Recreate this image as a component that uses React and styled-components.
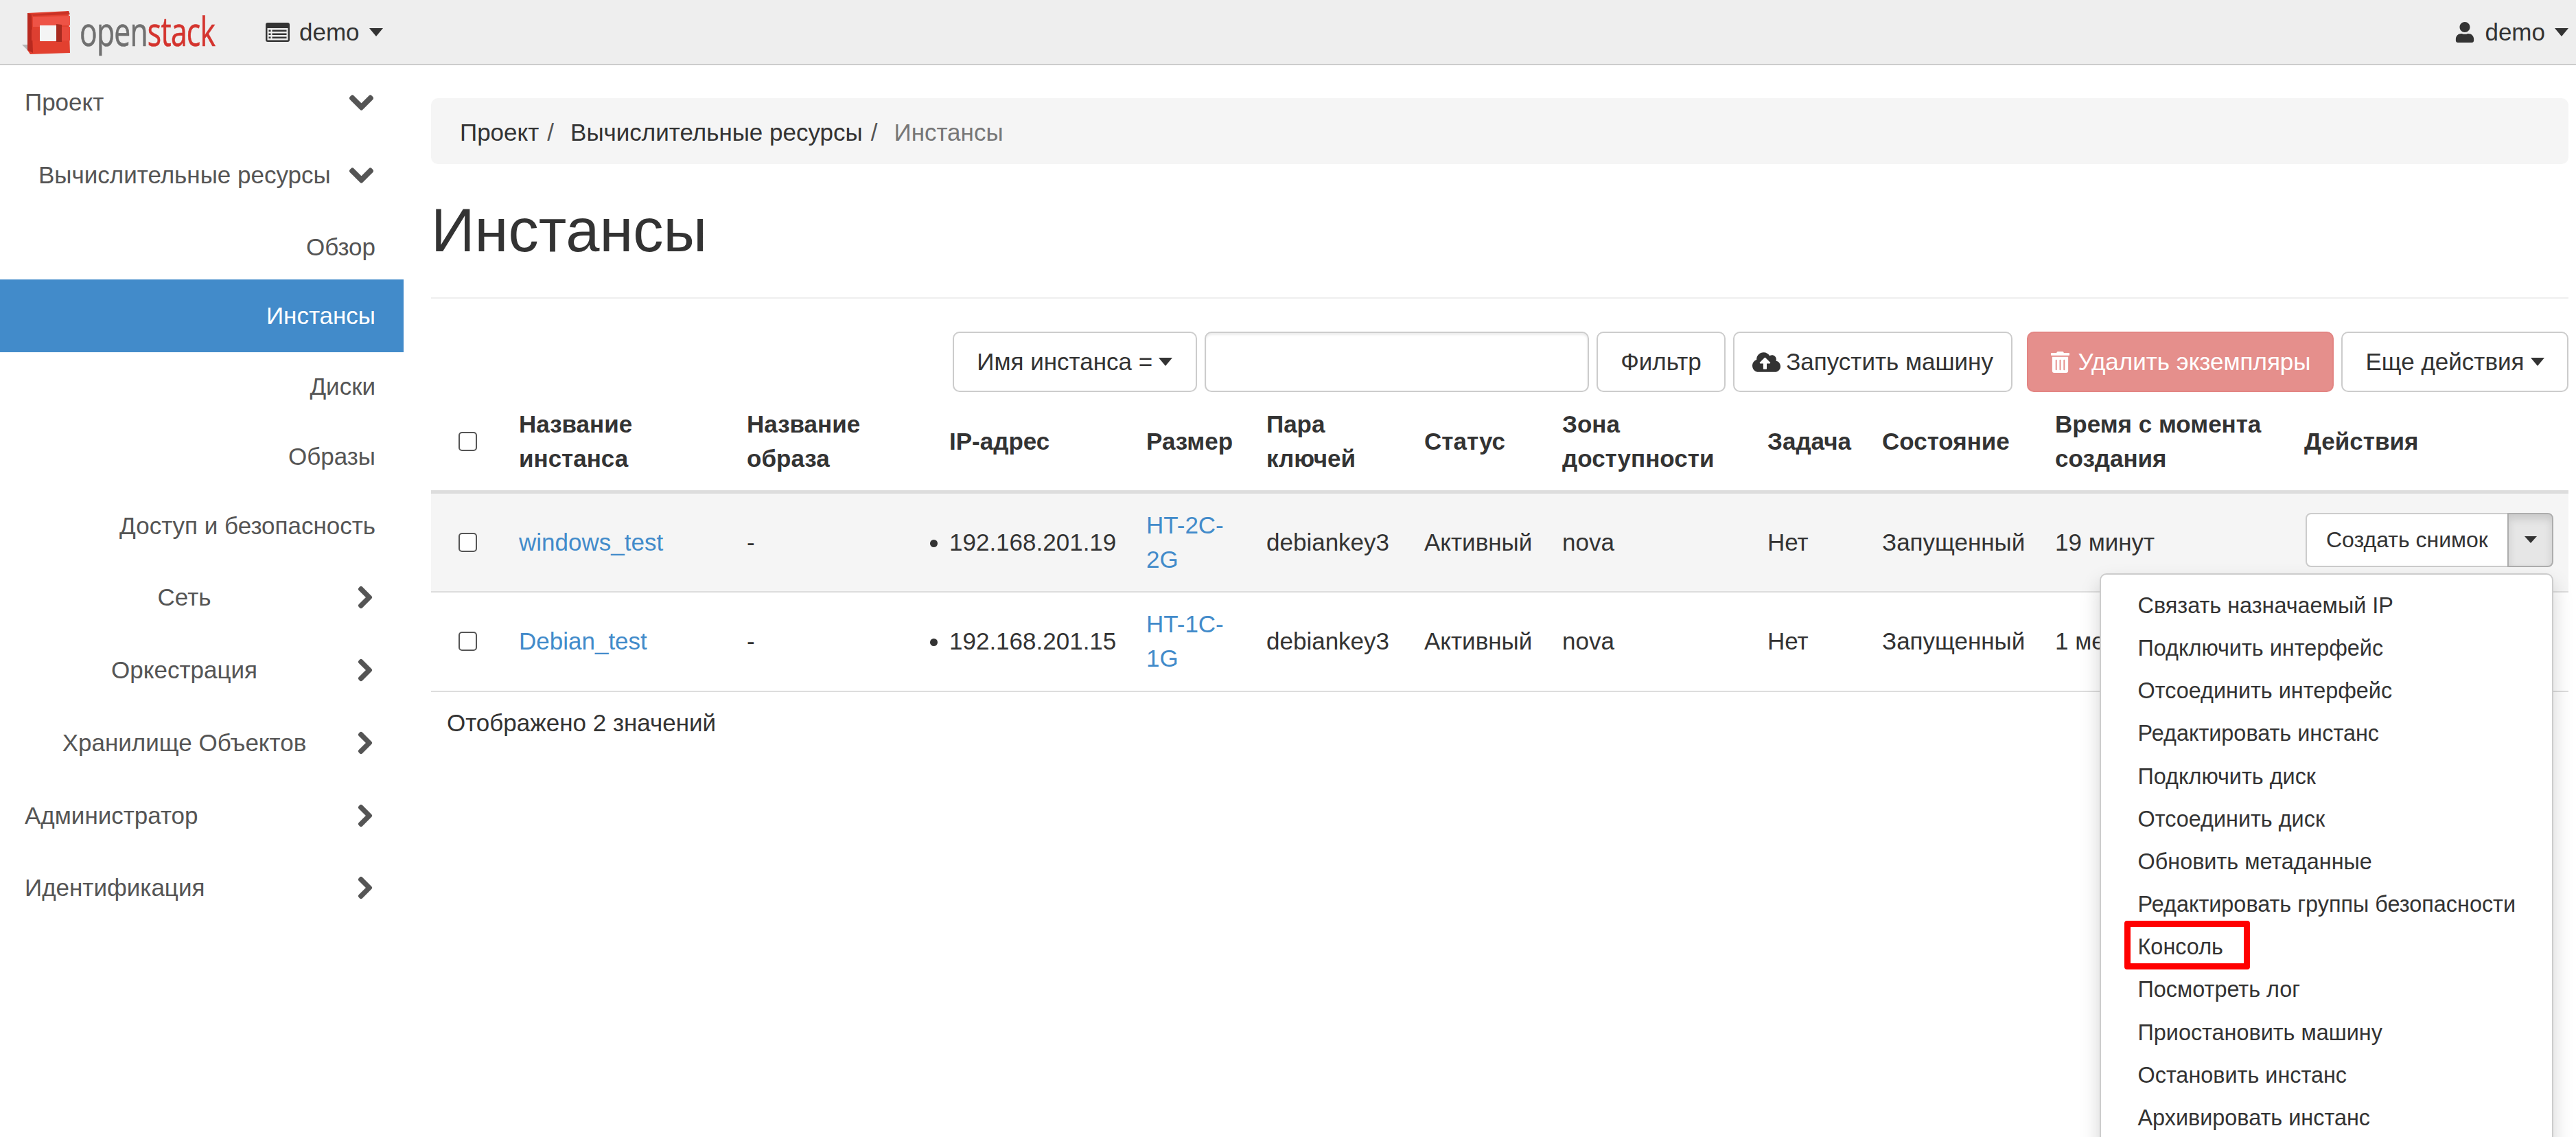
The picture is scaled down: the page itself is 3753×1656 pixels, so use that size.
import React from 'react';
import styled, { createGlobalStyle } from 'styled-components';
import {
    FaChevronDown,
    FaChevronRight,
    FaUser,
    FaTrashAlt,
    FaCloudUploadAlt,
} from 'react-icons/fa';

const GlobalStyle = createGlobalStyle`
    html, body {
        margin: 0;
        padding: 0;
        background: #ffffff;
    }
    body {
        font-family: "Liberation Sans", Arial, sans-serif;
        font-size: 35px;
        line-height: 50px;
        color: #333333;
    }
    * {
        box-sizing: border-box;
    }
`;

const Page = styled.div`
    width: 3753px;
    height: 1656px;
    overflow: hidden;
    background: #ffffff;
`;

const TopBar = styled.header`
    display: flex;
    align-items: center;
    height: 95px;
    padding: 0 11px 0 32px;
    background: #eeeeee;
    border-bottom: 2.5px solid #cccccc;
`;

const Logo = styled.div`
    display: flex;
    align-items: center;
    width: 355px;
    height: 93px;
    filter: blur(0.7px);
`;

const LogoWord = styled.span`
    display: inline-block;
    margin-left: 12px;
    margin-top: -4px;
    font-family: "Open Sans", sans-serif;
    font-size: 58px;
    line-height: 70px;
    letter-spacing: -1px;
    color: #707070;
    -webkit-text-stroke: 0.6px currentColor;
    transform: scaleX(0.735);
    transform-origin: left center;
    white-space: nowrap;

    & > b {
        font-weight: 400;
        color: #d4342e;
    }
`;

const TopMenu = styled.div`
    display: flex;
    align-items: center;
    gap: 14px;
    margin-left: ${(p) => (p.$right ? 'auto' : '0')};
    color: #333333;
`;

const Caret = styled.i`
    display: inline-block;
    width: 0;
    height: 0;
    border-top: ${(p) => p.$size * 0.6}px solid ${(p) => p.$color || '#333333'};
    border-left: ${(p) => p.$size / 2}px solid transparent;
    border-right: ${(p) => p.$size / 2}px solid transparent;
`;

const Layout = styled.div`
    display: flex;
    align-items: flex-start;
`;

const Sidebar = styled.nav`
    flex: none;
    width: 588px;
    padding-top: 1px;
    color: #555555;
`;

const ChevronDown = styled(FaChevronDown)`
    flex: none;
    stroke: currentColor;
    stroke-width: 24px;
`;

const ChevronRight = styled(FaChevronRight)`
    flex: none;
    stroke: currentColor;
    stroke-width: 24px;
`;

const ParentRow = styled.div`
    display: flex;
    align-items: center;
    justify-content: space-between;
    height: ${(p) => (p.$open ? '106px' : '105.5px')};
    padding: 0 ${(p) => (p.$open ? '42px' : '38px')} 0 ${(p) => (p.$sub ? '56px' : '36px')};
    margin-bottom: ${(p) => p.$gap || 0}px;
`;

const CenterRow = styled.div`
    display: flex;
    align-items: center;
    height: 106px;
    padding: 0 38px 0 23px;

    & > span {
        flex: 1;
        text-align: center;
    }
`;

const LeafRow = styled.div`
    display: flex;
    align-items: center;
    justify-content: flex-end;
    height: ${(p) => (p.$active ? '105.5px' : '101.5px')};
    margin-top: ${(p) => (p.$active ? '-4px' : '0')};
    padding-right: 41px;
    background: ${(p) => (p.$active ? '#428bca' : 'transparent')};
    color: ${(p) => (p.$active ? '#ffffff' : '#555555')};
`;

const Main = styled.main`
    flex: 1;
    min-width: 0;
    padding: 48px 11px 0 40px;
`;

const Breadcrumb = styled.ol`
    display: flex;
    align-items: center;
    height: 96px;
    margin: 0;
    padding: 3px 42px 0;
    list-style: none;
    background: #f5f5f5;
    border-radius: 10px;
`;

const Crumb = styled.li`
    color: ${(p) => (p.$last ? '#777777' : '#333333')};

    &:not(:last-child)::after {
        content: '/';
        padding: 0 24px 0 12px;
        color: #555555;
    }
`;

const PageHeader = styled.div`
    display: flex;
    align-items: center;
    height: 196px;
    border-bottom: 2px solid #eeeeee;
`;

const Title = styled.h1`
    margin: 0;
    font-size: 88.5px;
    font-weight: 400;
    line-height: 96px;
    color: #333333;
`;

const Toolbar = styled.div`
    display: flex;
    justify-content: flex-end;
    gap: 11px;
    margin-top: 48px;
`;

const Button = styled.button`
    display: inline-flex;
    align-items: center;
    gap: ${(p) => p.$gap || 9}px;
    height: 88px;
    padding: 0 ${(p) => p.$pad || 33.5}px;
    font: inherit;
    color: #333333;
    background: #ffffff;
    border: 2.4px solid #cccccc;
    border-radius: 10px;
    white-space: nowrap;
`;

const DangerButton = styled(Button)`
    margin-left: 10px;
    color: #ffffff;
    background: #e58f8c;
    border-color: #e38583;
`;

const FilterInput = styled.input`
    width: 560px;
    height: 88px;
    padding: 0 30px;
    font: inherit;
    border: 2.4px solid #cccccc;
    border-radius: 10px;
    box-shadow: inset 0 3px 3px rgba(0, 0, 0, 0.075);
`;

const Table = styled.table`
    width: 3114px;
    border-collapse: collapse;
    table-layout: fixed;
`;

const Col = styled.col`
    width: ${(p) => p.$w}px;
`;

const Th = styled.th`
    height: 145.5px;
    padding: 0 19px;
    font-weight: 700;
    text-align: left;
    vertical-align: middle;
    border-bottom: 5px solid #dddddd;
`;

const Tr = styled.tr`
    background: ${(p) => (p.$hover ? '#f5f5f5' : 'transparent')};
`;

const Td = styled.td`
    height: 145px;
    padding: 0 19px;
    vertical-align: middle;
    border-bottom: 2.4px solid #dddddd;
`;

const CheckCell = styled.div`
    display: flex;
    padding-left: 21px;
`;

const Checkbox = styled.input`
    width: 27px;
    height: 28px;
    margin: 0;
    appearance: none;
    background: #ffffff;
    border: 2.4px solid #555555;
    border-radius: 5px;
`;

const TableLink = styled.a`
    color: #428bca;
`;

const IpList = styled.ul`
    margin: 0;
    padding: 0;
`;

const ActionGroup = styled.div`
    position: relative;
    display: flex;
    width: 361px;
    height: 79px;
    margin: 0 0 7px 2px;
`;

const ActionMain = styled.button`
    flex: 1;
    padding: 0 0 0 28px;
    font: inherit;
    font-size: 32px;
    text-align: left;
    color: #333333;
    background: #ffffff;
    border: 2.4px solid #cccccc;
    border-radius: 8px 0 0 8px;
`;

const ActionCaret = styled.button`
    display: flex;
    align-items: center;
    justify-content: center;
    width: 67px;
    margin-left: -2px;
    padding: 0;
    background: #e6e6e6;
    border: 2.4px solid #adadad;
    border-radius: 0 8px 8px 0;
    box-shadow: inset 0 7px 12px rgba(0, 0, 0, 0.125);
`;

const Dropdown = styled.ul`
    position: absolute;
    top: 88.5px;
    right: 0;
    z-index: 5;
    width: 661px;
    margin: 0;
    padding: 13.5px 0;
    list-style: none;
    background: #ffffff;
    border: 2.4px solid #cccccc;
    border-radius: 10px;
    box-shadow: 0 14px 29px rgba(0, 0, 0, 0.175);
`;

const DropdownItem = styled.li`
    position: relative;
    height: 62.2px;
    padding-left: 53.5px;
    font-size: 32.4px;
    line-height: 62px;
    white-space: nowrap;
`;

const Highlight = styled.span`
    position: absolute;
    top: -7px;
    left: 34px;
    width: 183px;
    height: 71px;
    border: 9px solid #ff0000;
    border-radius: 4px;
`;

const Footer = styled.div`
    padding: 20.5px 23px 0;
`;

const ListIcon = () => (
    <svg width="35" height="28" viewBox="0 0 35 28">
        <rect x="0" y="0" width="35" height="28" rx="3" fill="#333333" />
        <rect x="2.5" y="8" width="30" height="17.5" fill="#eeeeee" />
        <rect x="4.5" y="10.5" width="3" height="2.5" fill="#333333" />
        <rect x="4.5" y="15.5" width="3" height="2.5" fill="#333333" />
        <rect x="4.5" y="20.5" width="3" height="2.5" fill="#333333" />
        <rect x="9.5" y="10.5" width="21" height="2.5" fill="#333333" />
        <rect x="9.5" y="15.5" width="21" height="2.5" fill="#333333" />
        <rect x="9.5" y="20.5" width="21" height="2.5" fill="#333333" />
    </svg>
);

const LogoCube = () => (
    <svg width="72" height="64" viewBox="0 0 72 64">
        <path d="M0 50 L8 50 L16 62 L8 58 Z" fill="#b5b5b5" />
        <path d="M8 4 L68 1 L70 62 L12 64 L8 58 Z" fill="#e2402f" />
        <path d="M8 4 L14 6 L16 62 L8 58 Z" fill="#b8291f" />
        <path d="M14 6 L64 2 L68 1 L70 6 L16 8 Z" fill="#c93226" />
        <path d="M16 10 L70 8 L70 22 L50 22 L26 24 L16 24 Z" fill="#ee5346" />
        <rect x="26" y="22" width="25" height="23" fill="#f4f4f4" />
        <path d="M50 20 L58 21 L58 46 L50 46 Z" fill="#a82a1f" />
        <path d="M58 24 L70 24 L70 44 L58 44 Z" fill="#e8493c" />
        <path d="M14 28 L26 28 L26 44 L14 44 Z" fill="#dd3f31" />
    </svg>
);

const columns = [109, 332, 295, 287, 175, 230, 201, 299, 167, 252, 363, 404];

const headers = [
    'Название инстанса',
    'Название образа',
    'IP-адрес',
    'Размер',
    'Пара ключей',
    'Статус',
    'Зона доступности',
    'Задача',
    'Состояние',
    'Время с момента создания',
    'Действия',
];

const menuItems = [
    'Связать назначаемый IP',
    'Подключить интерфейс',
    'Отсоединить интерфейс',
    'Редактировать инстанс',
    'Подключить диск',
    'Отсоединить диск',
    'Обновить метаданные',
    'Редактировать группы безопасности',
    'Консоль',
    'Посмотреть лог',
    'Приостановить машину',
    'Остановить инстанс',
    'Архивировать инстанс',
];

const instances = [
    {
        name: 'windows_test',
        ip: '192.168.201.19',
        size: 'HT-2C-2G',
        time: '19 минут',
        open: true,
    },
    {
        name: 'Debian_test',
        ip: '192.168.201.15',
        size: 'HT-1C-1G',
        time: '1 месяц',
        open: false,
    },
];

const App = () => {
    return (
        <Page>
            <GlobalStyle />
            <TopBar>
                <Logo>
                    <LogoCube />
                    <LogoWord>
                        open<b>stack</b>
                    </LogoWord>
                </Logo>
                <TopMenu>
                    <ListIcon />
                    demo
                    <Caret $size={21} />
                </TopMenu>
                <TopMenu $right>
                    <FaUser size={30} />
                    demo
                    <Caret $size={21} />
                </TopMenu>
            </TopBar>
            <Layout>
                <Sidebar>
                    <ParentRow $open>
                        Проект
                        <ChevronDown size={39} />
                    </ParentRow>
                    <ParentRow $open $sub $gap={1.5}>
                        Вычислительные ресурсы
                        <ChevronDown size={39} />
                    </ParentRow>
                    <LeafRow>Обзор</LeafRow>
                    <LeafRow $active>Инстансы</LeafRow>
                    <LeafRow>Диски</LeafRow>
                    <LeafRow>Образы</LeafRow>
                    <LeafRow>Доступ и безопасность</LeafRow>
                    <CenterRow>
                        <span>Сеть</span>
                        <ChevronRight size={36} />
                    </CenterRow>
                    <CenterRow>
                        <span>Оркестрация</span>
                        <ChevronRight size={36} />
                    </CenterRow>
                    <CenterRow>
                        <span>Хранилище Объектов</span>
                        <ChevronRight size={36} />
                    </CenterRow>
                    <ParentRow>
                        Администратор
                        <ChevronRight size={36} />
                    </ParentRow>
                    <ParentRow>
                        Идентификация
                        <ChevronRight size={36} />
                    </ParentRow>
                </Sidebar>
                <Main>
                    <Breadcrumb>
                        <Crumb>Проект</Crumb>
                        <Crumb>Вычислительные ресурсы</Crumb>
                        <Crumb $last>Инстансы</Crumb>
                    </Breadcrumb>
                    <PageHeader>
                        <Title>Инстансы</Title>
                    </PageHeader>
                    <Toolbar>
                        <Button>
                            Имя инстанса =
                            <Caret $size={20} />
                        </Button>
                        <FilterInput />
                        <Button>Фильтр</Button>
                        <Button $pad={26} $gap={8}>
                            <FaCloudUploadAlt size={41} />
                            Запустить машину
                        </Button>
                        <DangerButton $pad={31.5} $gap={10}>
                            <FaTrashAlt size={31} />
                            Удалить экземпляры
                        </DangerButton>
                        <Button>
                            Еще действия
                            <Caret $size={20} />
                        </Button>
                    </Toolbar>
                    <Table>
                        <colgroup>
                            {columns.map((w, i) => (
                                <Col $w={w} key={i} />
                            ))}
                        </colgroup>
                        <thead>
                            <tr>
                                <Th>
                                    <CheckCell>
                                        <Checkbox type="checkbox" />
                                    </CheckCell>
                                </Th>
                                {headers.map((title) => (
                                    <Th key={title}>{title}</Th>
                                ))}
                            </tr>
                        </thead>
                        <tbody>
                            {instances.map((row) => (
                                <Tr $hover={row.open} key={row.name}>
                                    <Td>
                                        <CheckCell>
                                            <Checkbox type="checkbox" />
                                        </CheckCell>
                                    </Td>
                                    <Td>
                                        <TableLink>{row.name}</TableLink>
                                    </Td>
                                    <Td>-</Td>
                                    <Td>
                                        <IpList>
                                            <li>{row.ip}</li>
                                        </IpList>
                                    </Td>
                                    <Td>
                                        <TableLink>{row.size}</TableLink>
                                    </Td>
                                    <Td>debiankey3</Td>
                                    <Td>Активный</Td>
                                    <Td>nova</Td>
                                    <Td>Нет</Td>
                                    <Td>Запущенный</Td>
                                    <Td>{row.time}</Td>
                                    <Td>
                                        <ActionGroup>
                                            <ActionMain>Создать снимок</ActionMain>
                                            <ActionCaret>
                                                <Caret $size={18} />
                                            </ActionCaret>
                                            {row.open && (
                                                <Dropdown>
                                                    {menuItems.map((item) => (
                                                        <DropdownItem key={item}>
                                                            {item}
                                                            {item === 'Консоль' && <Highlight />}
                                                        </DropdownItem>
                                                    ))}
                                                </Dropdown>
                                            )}
                                        </ActionGroup>
                                    </Td>
                                </Tr>
                            ))}
                        </tbody>
                    </Table>
                    <Footer>Отображено 2 значений</Footer>
                </Main>
            </Layout>
        </Page>
    );
};

export default App;
